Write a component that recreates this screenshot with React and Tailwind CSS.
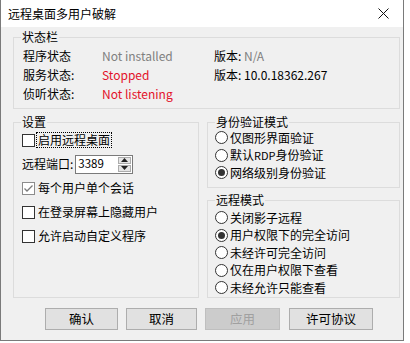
import React from 'react';

const font = { fontFamily: '"Noto Sans CJK SC", "Noto Sans", sans-serif' };

function Check({ checked, focus, children }) {
  return (
    <div className="flex items-center h-[24px]">
      <span
        className={`w-[13px] h-[13px] bg-white border flex items-center justify-center ${
          checked ? 'border-[#8c8c8c]' : 'border-[#333]'
        }`}
      >
        {checked && (
          <svg width="11" height="11" viewBox="0 0 11 11">
            <path d="M1.5 5.5 L4 8 L9.5 2.5" fill="none" stroke="#7a7a7a" strokeWidth="1.3" />
          </svg>
        )}
      </span>
      <span
        className={`ml-[1px] px-[1px] leading-[14px] ${
          focus ? 'border border-dotted border-black' : 'border border-transparent'
        }`}
      >
        {children}
      </span>
    </div>
  );
}

function Radio({ on, children }) {
  return (
    <div className="flex items-center h-[17.5px]">
      <span className="w-[13px] h-[13px] rounded-full bg-white border border-[#333] flex items-center justify-center">
        {on && <span className="w-[7px] h-[7px] rounded-full bg-[#333]" />}
      </span>
      <span className="ml-[2px]">{children}</span>
    </div>
  );
}

function Group({ title, className, children }) {
  return (
    <fieldset className={`border border-[#dcdcdc] ${className}`}>
      <legend className="ml-[7px] px-[1px] leading-[16px]">{title}</legend>
      {children}
    </fieldset>
  );
}

export default function App() {
  return (
    <div className="w-[404px] h-[341px] bg-[#f0f0f0] border-x border-b border-[#7a7a7a] text-[12px] text-black" style={font}>
      {/* title bar */}
      <div className="h-[27px] bg-white flex items-center justify-between pl-[7px] pr-[10px]">
        <span className="text-[12px]">远程桌面多用户破解</span>
        <svg width="11" height="11" viewBox="0 0 11 11" className="mr-[4px]">
          <path d="M0.5 0.5 L10.5 10.5 M10.5 0.5 L0.5 10.5" stroke="#111" strokeWidth="1" />
        </svg>
      </div>

      <div className="pl-[12px] pt-[2px]">
        <Group title="状态栏" className="w-[387px] h-[80px]">
          <div className="pl-[9px] pt-[1px]">
            <div className="flex h-[19px] items-center">
              <span className="w-[79px]">程序状态</span>
              <span className="w-[112px] text-[#7f7f7f]">Not installed</span>
              <span>版本: <span className="text-[#7f7f7f]">N/A</span></span>
            </div>
            <div className="flex h-[19px] items-center">
              <span className="w-[79px]">服务状态:</span>
              <span className="w-[112px] text-[#e3112a]">Stopped</span>
              <span>版本: 10.0.18362.267</span>
            </div>
            <div className="flex h-[19px] items-center">
              <span className="w-[79px]">侦听状态:</span>
              <span className="w-[112px] text-[#e3112a]">Not listening</span>
            </div>
          </div>
        </Group>

        <div className="flex gap-[8px] mt-[5px]">
          <Group title="设置" className="w-[186px] h-[184px]">
            <div className="pl-[8px] -mt-[2px]">
              <Check focus>启用远程桌面</Check>
              <div className="flex items-center h-[24px]">
                <span>远程端口:</span>
                <div className="ml-[2px] w-[58px] h-[19px] bg-white border border-[#7a7a7a] flex items-center justify-between">
                  <span className="pl-[2px] text-[11.5px]">3389</span>
                  <div className="w-[13px] h-[15px] mr-[1px] flex flex-col gap-[1px]">
                    <div className="flex-1 bg-[#e5e5e5] border border-[#acacac] flex items-center justify-center">
                      <svg width="7" height="4" viewBox="0 0 7 4"><path d="M0 4 L3.5 0 L7 4 Z" fill="#222" /></svg>
                    </div>
                    <div className="flex-1 bg-[#e5e5e5] border border-[#acacac] flex items-center justify-center">
                      <svg width="7" height="4" viewBox="0 0 7 4"><path d="M0 0 L3.5 4 L7 0 Z" fill="#222" /></svg>
                    </div>
                  </div>
                </div>
              </div>
              <Check checked>每个用户单个会话</Check>
              <Check>在登录屏幕上隐藏用户</Check>
              <Check>允许启动自定义程序</Check>
            </div>
          </Group>

          <div className="flex flex-col">
            <Group title="身份验证模式" className="w-[193px] h-[74px]">
              <div className="pl-[7px] mt-[-1px]">
                <Radio>仅图形界面验证</Radio>
                <Radio>默认<span className="text-[11px]">RDP</span>身份验证</Radio>
                <Radio on>网络级别身份验证</Radio>
              </div>
            </Group>
            <Group title="远程模式" className="w-[193px] h-[106px] mt-[4px]">
              <div className="pl-[7px] pt-[1px]">
                <Radio>关闭影子远程</Radio>
                <Radio on>用户权限下的完全访问</Radio>
                <Radio>未经许可完全访问</Radio>
                <Radio>仅在用户权限下查看</Radio>
                <Radio>未经允许只能查看</Radio>
              </div>
            </Group>
          </div>
        </div>

        <div className="flex mt-[10px] ml-[32px] gap-[8px] text-[12.5px]">
          <button className="w-[73px] h-[22px] bg-[#e1e1e1] border border-[#adadad]">确认</button>
          <button className="w-[71px] h-[22px] bg-[#e1e1e1] border border-[#adadad]">取消</button>
          <button className="w-[75px] h-[22px] bg-[#cccccc] border border-[#bfbfbf] text-[#a0a0a0]">应用</button>
          <button className="w-[84px] h-[22px] bg-[#e1e1e1] border border-[#adadad] ml-[1px]">许可协议</button>
        </div>
      </div>
    </div>
  );
}
